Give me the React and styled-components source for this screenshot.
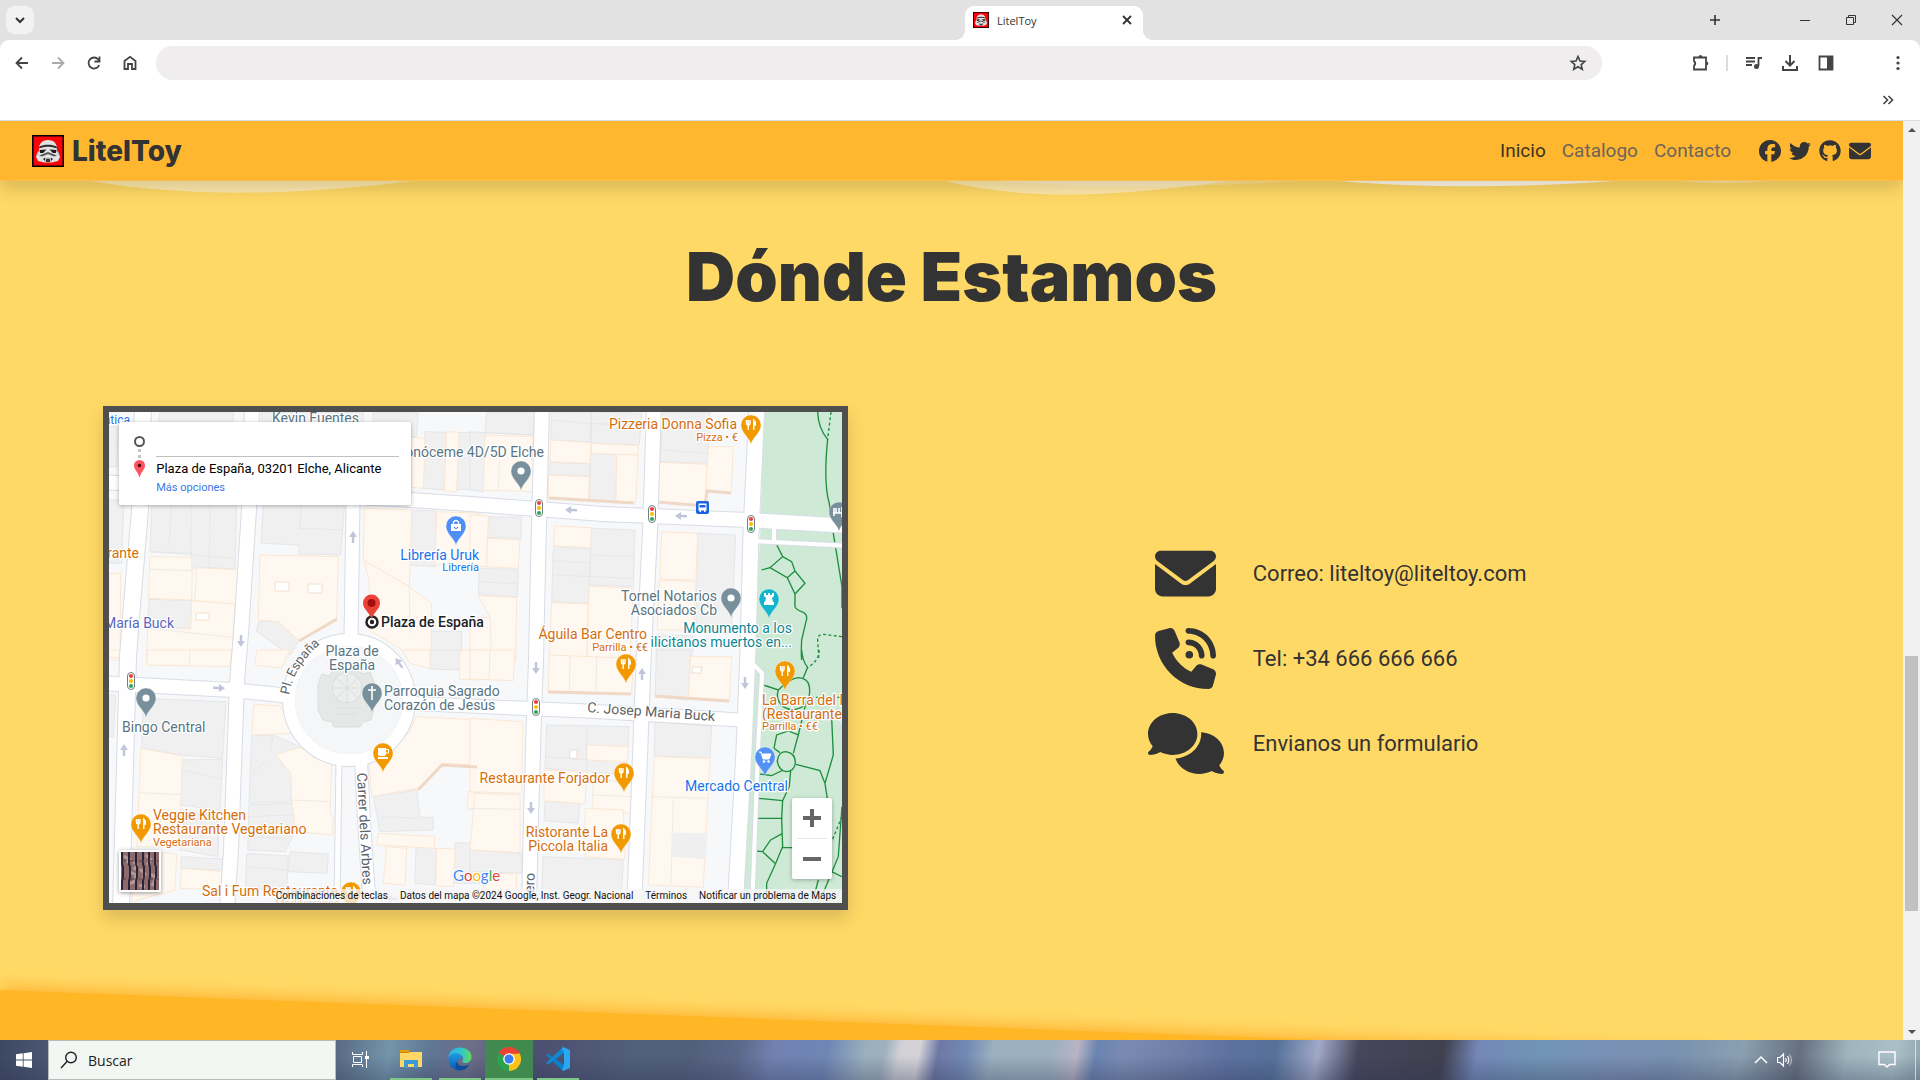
import React from "react";
import styled, { createGlobalStyle } from "styled-components";
import { FaFacebook, FaTwitter, FaGithub, FaEnvelope, FaPhoneVolume, FaComments } from "react-icons/fa6";

const GlobalStyle = createGlobalStyle`
  *, *::before, *::after { box-sizing: border-box; }
  html, body { margin: 0; padding: 0; }
  body { font-family: Roboto, "Liberation Sans", sans-serif; color: #333; overflow: hidden; }
  button { border: 0; background: none; padding: 0; font: inherit; color: inherit; cursor: pointer; }
  input { border: 0; outline: 0; background: none; padding: 0; margin: 0; font: inherit; color: inherit; min-width: 0; }
  a { color: inherit; text-decoration: none; }
  ul { list-style: none; margin: 0; padding: 0; }
`;

const Desktop = styled.div`
  display: flex;
  flex-direction: column;
  height: 100vh;
  background: #e2e2e2;
`;

/* ---------- Browser chrome ---------- */

const TabStrip = styled.div`
  display: flex;
  align-items: center;
  flex: none;
  height: 40px;
  padding-left: 6px;
  background: #e2e2e2;
`;

const TabSearch = styled.button`
  display: grid;
  place-items: center;
  width: 28px;
  height: 28px;
  border-radius: 9px;
  background: #f2f2f2;
`;

const Tab = styled.div`
  position: relative;
  align-self: flex-end;
  display: flex;
  align-items: center;
  gap: 8px;
  width: 178px;
  height: 34px;
  margin-left: auto;
  padding: 0 8px 6px;
  border-radius: 9px 9px 0 0;
  background: #fff;
  font: 11px "Open Sans", "Noto Sans", sans-serif;
  color: #333;
  &::before, &::after {
    content: "";
    position: absolute;
    bottom: 0;
    width: 10px;
    height: 10px;
  }
  &::before { left: -10px; background: radial-gradient(circle at 0 0, transparent 10px, #fff 10px); }
  &::after { right: -10px; background: radial-gradient(circle at 100% 0, transparent 10px, #fff 10px); }
  button { display: grid; place-items: center; }
`;

const TabTitle = styled.span`flex: 1;`;

const StripRight = styled.div`
  display: flex;
  flex: 1;
  max-width: 777px;
  justify-content: flex-end;
`;

const StripButton = styled.button`
  display: grid;
  place-items: center;
  width: 46px;
  height: 40px;
  margin-right: ${(p) => (p.$gap ? "44px" : "0")};
`;

const ToolbarArea = styled.div`
  flex: none;
  height: 81px;
  background: #fff;
  border-radius: 9px 9px 0 0;
  border-bottom: 1px solid #dcdcdc;
`;

const Toolbar = styled.div`
  display: flex;
  align-items: center;
  padding: 6px 4px 0;
`;

const ToolButton = styled.button`
  display: grid;
  place-items: center;
  flex: none;
  width: 36px;
  height: 34px;
  color: ${(p) => (p.$muted ? "#aaa" : "#444")};
`;

const Omnibox = styled.div`
  display: flex;
  align-items: center;
  flex: 1;
  height: 34px;
  margin-left: 8px;
  padding: 0 6px 0 18px;
  border-radius: 17px;
  background: #efedee;
  input { flex: 1; height: 100%; font-size: 14px; }
`;

const Extensions = styled.div`
  display: flex;
  align-items: center;
  width: 314px;
  padding-left: 80px;
`;

const Divider = styled.span`
  width: 2px;
  height: 16px;
  margin: 0 8px;
  background: #dcdcdc;
`;

const LastTool = styled.div`
  margin-left: auto;
`;

const Bookmarks = styled.div`
  display: flex;
  justify-content: flex-end;
  padding: 3px 14px 0;
`;

/* ---------- Page viewport ---------- */

const Viewport = styled.div`
  display: flex;
  flex: 1;
  min-height: 0;
`;

const Page = styled.div`
  display: flex;
  flex-direction: column;
  flex: 1;
  min-width: 0;
  overflow: hidden;
  background: #ffd966;
`;

const Scrollbar = styled.div`
  display: flex;
  flex-direction: column;
  width: 17px;
  background: #f1f1f1;
`;

const ScrollArrow = styled.button`
  display: grid;
  place-items: center;
  height: 17px;
`;

const ScrollSpace = styled.div`flex: ${(p) => p.$grow};`;

const ScrollThumb = styled.div`
  flex: ${(p) => p.$grow};
  margin: 0 2px;
  background: #c1c1c1;
`;

const Navbar = styled.header`
  position: relative;
  z-index: 2;
  display: flex;
  align-items: center;
  flex: none;
  height: 60px;
  padding: 0 32px;
  background: #ffb730;
  border-bottom: 1px solid #ffbc50;
  box-shadow: 0 8px 16px rgba(0, 0, 0, 0.15);
`;

const Brand = styled.a`
  display: flex;
  align-items: center;
  gap: 8px;
  font: 800 28px Inter, sans-serif;
  color: #333;
`;

const NavLinks = styled.nav`
  display: flex;
  gap: 16px;
  margin-left: auto;
  margin-right: 28px;
  font-size: 19px;
`;

const NavLink = styled.a`
  color: ${(p) => (p.$active ? "#3b3220" : "#6d6459")};
`;

const Social = styled.div`
  display: flex;
  gap: 8px;
  color: #333;
  a { display: flex; }
  svg { width: 22px; height: 22px; }
`;

const Waves = styled.svg`
  display: block;
  flex: none;
  width: 100%;
  height: 15px;
`;

const Title = styled.h1`
  margin: 40px 0 90px;
  text-align: center;
  font: 900 68px/80px Inter, Roboto, sans-serif;
  color: #333;
`;

const Columns = styled.main`
  display: grid;
  grid-template-columns: 1fr 1fr;
  align-items: center;
  justify-items: center;
`;

const ContactList = styled.ul`
  justify-self: stretch;
  margin-left: 20%;
`;

const ContactRow = styled.li`
  display: grid;
  grid-template-columns: 88px 1fr;
  align-items: center;
  gap: 23px;
  height: 85px;
  font-size: 22px;
  color: #333;
  svg { width: ${(p) => (p.$wide ? "76px" : "61px")}; height: 61px; justify-self: center; }
`;

const Slant = styled.svg`
  display: block;
  flex: none;
  width: 100%;
  height: 50px;
  margin-top: auto;
  overflow: visible;
  filter: drop-shadow(0 -3px 8px rgba(255, 160, 20, 0.7));
`;

/* ---------- Map ---------- */

const MapFrame = styled.section`
  position: relative;
  width: 100%;
  max-width: 745px;
  border: 6px solid #4f4f4f;
  border-bottom-width: 7px;
  box-shadow: 0 8px 16px rgba(0, 0, 0, 0.15);
  overflow: hidden;
`;

const MapDrawing = styled.svg`
  display: block;
  width: 100%;
  height: auto;
  font-family: Roboto, sans-serif;
`;

const DirectionsCard = styled.form`
  position: absolute;
  top: 10px;
  left: 10px;
  display: grid;
  grid-template-columns: 12px 1fr;
  gap: 11px;
  width: 292px;
  height: 83px;
  padding: 0 12px 0 14px;
  background: #fff;
  border-radius: 2px;
  box-shadow: 0 1px 4px rgba(0, 0, 0, 0.3);
`;

const Fields = styled.div`
  display: flex;
  flex-direction: column;
  font-size: 13px;
  color: #000;
`;

const OriginInput = styled.input`
  height: 35px;
  border-bottom: 1px solid #c0c0c0;
`;

const DestinationInput = styled.input`height: 22px;`;

const MoreOptions = styled.a`
  font-size: 11px;
  line-height: 17px;
  color: #3a77e8;
`;

const SatelliteButton = styled.button`
  position: absolute;
  left: 10px;
  bottom: 11px;
  border: 2px solid #fff;
  border-radius: 2px;
  box-shadow: 0 1px 4px rgba(0, 0, 0, 0.4);
  svg { display: block; }
`;

const ZoomControls = styled.div`
  position: absolute;
  right: 10px;
  bottom: 24px;
  width: 40px;
  background: #fff;
  border-radius: 2px;
  box-shadow: 0 1px 4px rgba(0, 0, 0, 0.3);
  hr { margin: 0 5px; border: 0; height: 1px; background: #e6e6e6; }
`;

const ZoomButton = styled.button`
  display: grid;
  place-items: center;
  width: 40px;
  height: 40px;
`;

const Attribution = styled.footer`
  position: absolute;
  right: 0;
  bottom: 0;
  display: flex;
  gap: 12px;
  height: 14px;
  padding: 0 6px 0 1px;
  background: rgba(245, 245, 245, 0.75);
  font-size: 10px;
  line-height: 14px;
  color: #111;
  white-space: nowrap;
`;

/* Buildings are traced on four map tiles, each drawn at three units per pixel. */
const TILES = [
  {
    x: 100, y: 400,
    grey: [
      "27,80 55,80 50,200 27,200", "180,36 400,36 400,66 175,66", "485,36 790,36 790,66 485,66",
      "820,36 955,36 950,110 820,110", "975,95 1040,97 1035,270 970,265", "1077,97 1140,98 1140,270 1070,268",
      "155,318 410,318 405,507 275,500 275,460 150,455", "147,598 275,602 272,685 143,680",
      "27,300 72,300 65,490 27,490", "490,318 733,318 728,390 722,465 597,462 597,435 483,430",
      "475,665 535,665 597,722 570,765 470,695", "935,330 1010,333 1005,500 928,495", "993,693 1085,695 1085,780 993,780",
    ],
    cream: [
      "1040,95 1077,97 1070,275 1033,272", "933,112 975,115 970,265 933,262",
      "150,470 275,472 275,510 290,503 418,510 410,615 275,600 145,595", "143,685 272,687 275,602 405,612 395,780 140,780",
      "27,520 62,520 60,780 27,780", "480,465 715,470 710,655 597,722 535,665 475,660",
      "793,325 935,330 930,490 928,560 790,480", "1010,335 1140,340 1140,490 1005,495",
      "793,482 928,560 995,612 993,780 940,780 900,745 808,690 808,545",
    ],
    lines: "M213,318 L208,440 M275,318 L272,460 M330,318 L328,505 M150,455 L405,475 M150,508 L277,512 L275,600 M290,503 L285,600 M143,685 L397,712 M603,318 L600,385 L728,390 M928,560 L930,700",
    yards: "",
  },
  {
    x: 470, y: 400,
    grey: [
      "50,36 195,36 188,105 45,98", "0,95 45,98 40,275 0,270", "245,36 365,36 360,125 242,120",
      "365,36 515,40 508,135 365,130", "240,187 360,192 358,228 238,225", "362,160 440,165 438,305 358,300",
      "580,36 720,36 712,190 570,185", "365,385 495,390 490,560 358,555", "250,440 362,447 355,610 245,605",
      "55,350 155,352 152,415 52,412", "28,505 145,508 142,590 25,585", "683,400 797,405 785,700 678,690",
      "560,705 670,708 668,780 558,780",
    ],
    cream: [
      "45,105 190,110 185,180 202,183 197,275 40,270", "242,120 362,128 360,190 240,185", "236,225 358,230 355,302 235,295",
      "440,160 505,165 497,308 438,302", "365,130 505,137 503,165 365,160", "565,187 712,193 708,318 560,308",
      "715,140 790,140 783,280 708,268", "255,378 365,383 362,443 250,437", "358,558 490,565 480,780 350,780",
      "245,608 355,612 350,780 238,780", "0,345 55,348 50,500 0,498", "52,415 150,420 145,505 50,500",
      "25,587 140,592 137,780 0,780 0,655 60,652", "575,395 683,400 678,540 570,537", "568,540 676,545 672,690 562,690",
    ],
    lines: "M45,98 L190,105 M242,60 L360,72 M365,70 L512,78 M570,150 L715,160 M250,525 L490,535 M248,482 L355,488 M360,465 L493,470 M28,545 L143,552 M88,180 L85,272 M60,652 L65,780",
    yards: "",
  },
  {
    x: 100, y: 650,
    grey: [
      "130,145 378,155 368,325 245,315 125,295", "27,135 47,135 40,260 27,260", "245,330 368,328 360,480 240,465",
      "243,480 355,500 355,620 240,600", "243,620 378,628 375,660 243,655",
      "455,258 520,255 600,290 530,315 545,340 575,370 573,455 447,460", "447,465 580,460 585,545 555,605 443,600",
      "570,605 685,612 682,670 565,665", "440,610 565,618 560,720 437,715", "820,440 950,420 960,500 1000,503 1000,540 840,545",
      "948,590 1010,595 1005,705 945,700", "1065,578 1140,580 1140,700 1062,700", "990,0 1080,0 1078,60 990,57",
    ],
    cream: [
      "143,0 395,0 390,50 140,45", "470,0 570,0 545,55 465,45", "123,295 247,318 238,590 110,590",
      "245,655 378,665 372,720 240,715", "462,163 540,168 560,200 575,250 455,255",
      "527,315 600,292 695,340 690,490 700,500 697,555 587,545 575,450 573,370",
      "950,200 1140,210 1140,345 1025,340 955,415 815,440 808,340 890,290 930,240",
      "835,550 1005,560 1003,595 830,585", "860,590 920,595 915,705 850,700", "1010,595 1065,597 1060,710 1008,708",
      "907,0 990,0 990,55 930,40", "1080,0 1140,0 1140,90 1078,88", "27,0 70,0 68,25 27,22",
      "110,600 230,612 225,720 95,755", "1105,425 1140,428 1140,480 1102,478",
    ],
    lines: "M270,0 L268,48 M245,360 L366,388 M117,428 L240,434 M520,255 L510,300 M450,380 L500,330 M573,450 L690,455 M447,500 L580,495 M443,560 L560,565 M440,650 L560,660 M840,500 L960,505",
    yards: "",
  },
  {
    x: 470, y: 650,
    grey: [
      "560,0 662,0 655,150 555,140", "0,600 155,610 155,670 0,665", "230,225 477,230 475,290 470,375 225,355",
      "225,455 330,460 325,520 222,512", "220,620 460,630 455,720 215,720", "555,215 725,228 720,325 553,318",
    ],
    cream: [
      "0,0 135,0 130,92 0,87", "238,15 490,25 485,132 235,122", "662,20 785,20 778,153 655,148",
      "0,205 158,215 155,430 0,425", "15,430 150,435 150,608 0,600", "350,285 475,290 472,335 350,330",
      "222,360 350,365 345,462 222,452", "370,390 490,395 485,490 368,480", "345,475 460,480 465,628 345,620",
      "553,320 720,325 700,712 535,705", "40,668 140,672 138,720 40,720",
    ],
    lines: "M350,228 L350,365 M225,320 L350,330 M60,0 L57,88 M300,20 L298,125 M380,20 L378,128 M545,440 L715,445 M610,445 L603,706 M0,475 L150,478 M370,435 L488,440",
    yards: "M300,300 L322,300 320,326 298,324Z M668,50 L695,52 693,70 665,68Z",
  },
];

const INNER_GREY = "612,548 712,550 708,628 606,620";

const PARK_PATHS = [
  { x: 470, y: 400, d: "M1043,36 Q1045,85 1073,118 Q1060,250 1078,310 L1090,400 L1116,560 V625 M918,430 L938,470 L900,503 L875,510 M938,470 L965,485 L975,513 L1005,550 L975,582 L952,533 L900,503 M975,513 L952,533 M975,582 V620 Q978,630 1000,637 Q1015,645 1008,665 L995,720 Q993,760 995,780", dash: "M1083,36 L1073,118 M1116,710 L1060,703 Q1043,703 1043,720 L1047,780" },
  { x: 470, y: 650, d: "M995,0 Q998,35 1013,52 L1000,83 M880,105 L925,120 Q960,85 985,83 Q1015,85 1018,110 Q1022,140 1010,150 L985,255 L970,310 M925,120 Q915,150 940,170 Q970,190 1005,165 M912,295 L920,255 L955,243 L985,255 M912,295 L930,308 M870,372 L905,377 L940,360 M978,343 L1050,362 L1065,400 L1072,445 M1065,400 L1090,315 L1085,200 M962,362 L958,410 L938,452 L935,505 L938,590 L915,645 L890,700 V728 M865,445 L938,452 M855,505 H938 M858,603 L878,605 L902,570 L938,550 M878,605 L915,640 M938,592 L970,593 M1116,470 L1105,620 L1060,728 M1045,690 L1035,728 M1085,665 L1116,680 M922,332 Q926,305 948,305 Q978,310 976,340 Q972,365 948,365 Q925,360 922,332Z", dash: "M1047,0 Q1050,30 1013,52 M1116,500 L1085,575 M1022,142 H1116" },
];

const ROADS = [
  { d: "M143,405 L140,510 L131,617 L128,657 L121,910", w: 16 },
  { d: "M252,405 L249,510 L241,633 L237,683 L231,850 L227,910", w: 14 },
  { d: "M353,500 L351,640", w: 13 },
  { d: "M100,482 L411,500 L470,504 L603,514 L747,520 L850,526", w: 14 },
  { d: "M542,405 L538,567 L536,660 L534,717 L531,817 L529,910", w: 14 },
  { d: "M654,405 L650,533 L644,650 L639,783 L634,910", w: 14 },
  { d: "M757,405 L751,533 L748,650 L744,750 L735,910", w: 15 },
  { d: "M100,683 L233,690 L290,696", w: 14 },
  { d: "M405,703 L470,706 L587,711 L740,720", w: 13 },
  { d: "M361,760 L364,820 L370,910", w: 12 },
  { d: "M339,758 L337,910", w: 5 },
  { d: "M774,525 V543", w: 4 },
  { d: "M752,541 L850,546", w: 4 },
  { d: "M753,664 L762,673 L758,750 L752,910", w: 4 },
];

const LIGHTS = [[539, 508], [652, 514], [751, 524], [131, 681], [536, 707]];

const ARROWS = [
  [353, 537, 0], [241, 641, 180], [571, 510, 272], [681, 516, 272], [219, 688, 92], [124, 750, 0],
  [536, 668, 180], [642, 674, 0], [745, 683, 180], [531, 808, 180], [399, 663, 325], [392, 899, 270],
];

const FORK = <g stroke="#fff" fill="none" strokeWidth="1.4"><path d="M-4.5,-5 V-2 Q-4.5,0 -2.8,0 Q-1,0 -1,-2 V-5 M-2.8,-5 V5" /><path d="M2.8,5 V-5 Q5,-3 4.4,0 H2.8" fill="#fff" /></g>;
const DOT = <circle r="3.6" fill="#fff" />;
const GLYPHS = {
  fork: FORK,
  dot: DOT,
  bag: <g><path d="M-5,-2 H5 V5 H-5Z" fill="#fff" /><path d="M-2.5,-2 V-4 Q0,-7 2.5,-4 V-2" stroke="#fff" fill="none" strokeWidth="1.3" /><path d="M-2,1 Q0,4 2,1" stroke="#4285f4" fill="none" strokeWidth="1.2" /></g>,
  castle: <path d="M-5,-6 H-3 V-4 H-1 V-6 H1 V-4 H3 V-6 H5 V-3 L3,-1 L4,3 H5 V6 H-5 V3 H-4 L-3,-1 L-5,-3Z" fill="#fff" />,
  cross: <path d="M0,-7 V7 M-4,-3 H4" stroke="#fff" strokeWidth="1.6" />,
  cup: <g fill="#fff"><path d="M-5,-5 H3 V1 Q3,3 1,3 H-3 Q-5,3 -5,1Z M-5,4 H5 V6 H-5Z" /><path d="M3,-3.5 H5.5 V0 H3" fill="none" stroke="#fff" /></g>,
  cart: <g><path d="M-6,-5 H-4 L-2,2 H4 L6,-3 H-3" fill="#fff" stroke="#fff" /><circle cx="-1" cy="4.5" r="1.3" fill="#fff" /><circle cx="3.5" cy="4.5" r="1.3" fill="#fff" /></g>,
  bench: <path d="M-5,-4 V4 M3,-5 V5 M-6,1 H5 M-3,-4 V1 M0,-4 V1" stroke="#fff" strokeWidth="1.6" />,
};

const PINS = [
  [521, 471, "#78909c", "dot"], [456, 526, "#4f8ff5", "bag"], [731, 598, "#78909c", "dot"], [769, 599, "#12b5cb", "castle"],
  [751, 425, "#f29900", "fork"], [626, 664, "#f29900", "fork"], [785, 671, "#f29900", "fork"], [146, 698, "#78909c", "dot"],
  [372, 693, "#78909c", "cross"], [383, 753, "#f29900", "cup"], [141, 824, "#f29900", "fork"], [351, 892, "#f29900", "fork"],
  [624, 773, "#f29900", "fork"], [621, 834, "#f29900", "fork"], [765, 757, "#5491f5", "cart"], [839, 512, "#78909c", "bench"],
];

const SLATE = "#5a7583";
const ORANGE = "#d56e0c";
const BLUE = "#1a73e8";
const TEAL = "#0b8793";

/* x, baseline, text, colour, anchor, size */
const LABELS = [
  [272, 423, "Kevin Fuentes", SLATE, "start", 14],
  [544, 457, "Conóceme 4D/5D Elche", SLATE, "end", 14],
  [130, 424, "Informática", BLUE, "end", 12],
  [139, 558, "Restaurante", ORANGE, "end", 14],
  [174, 628, "C. Josep María Buck", "#5a66c0", "end", 14],
  [479, 560, "Librería Uruk", BLUE, "end", 14],
  [479, 571, "Librería", BLUE, "end", 11],
  [352, 656, "Plaza de", SLATE, "middle", 14],
  [352, 670, "España", SLATE, "middle", 14],
  [384, 696, "Parroquia Sagrado", SLATE, "start", 14],
  [384, 710, "Corazón de Jesús", SLATE, "start", 14],
  [717, 601, "Tornel Notarios", SLATE, "end", 14],
  [717, 615, "Asociados Cb", SLATE, "end", 14],
  [792, 633, "Monumento a los", TEAL, "end", 14],
  [792, 647, "ilicitanos muertos en...", TEAL, "end", 14],
  [647, 639, "Águila Bar Centro", ORANGE, "end", 14],
  [648, 651, "Parrilla • €€", ORANGE, "end", 11],
  [737, 429, "Pizzeria Donna Sofia", ORANGE, "end", 14],
  [738, 441, "Pizza • €", ORANGE, "end", 11],
  [122, 732, "Bingo Central", SLATE, "start", 14],
  [153, 820, "Veggie Kitchen", ORANGE, "start", 14],
  [153, 834, "Restaurante Vegetariano", ORANGE, "start", 14],
  [153, 846, "Vegetariana", ORANGE, "start", 11],
  [202, 896, "Sal i Fum Restaurante", ORANGE, "start", 14],
  [275, 907, "Mediterránea", ORANGE, "start", 11],
  [610, 783, "Restaurante Forjador", ORANGE, "end", 14],
  [608, 837, "Ristorante La", ORANGE, "end", 14],
  [608, 851, "Piccola Italia", ORANGE, "end", 14],
  [762, 705, "La Barra del Parque", ORANGE, "start", 14],
  [762, 719, "(Restaurante)", ORANGE, "start", 14],
  [762, 730, "Parrilla • €€", ORANGE, "start", 11],
  [685, 791, "Mercado Central", BLUE, "start", 14],
];

function StreetMap() {
  return (
    <MapDrawing viewBox="109 412 733 491" role="img" aria-label="Mapa de la Plaza de España, Elche">
      <rect x="109" y="412" width="733" height="491" fill="#f7f8fa" />
      <polygon points="764,412 842,412 842,903 741,903 753,650 760,540" fill="#ceead6" />
      {TILES.map((t) => (
        <g key={`${t.x}-${t.y}`} transform={`translate(${t.x} ${t.y}) scale(0.3333)`} strokeWidth="3" strokeLinejoin="round">
          {t.grey.map((p) => <polygon key={p} points={p} fill="#f0f0f1" stroke="#e5e6e8" />)}
          {t.cream.map((p) => <polygon key={p} points={p} fill="#fff8f1" stroke="#fbe7d3" />)}
          <path d={t.lines} fill="none" stroke="#e6e3e2" strokeWidth="2" />
          {t.yards !== "" && <path d={t.yards} fill="#fff" stroke="#efdccb" />}
        </g>
      ))}
      <polygon points={INNER_GREY} transform="translate(470 650) scale(0.3333)" fill="#efeff0" />
      <g fill="#fff" stroke="#f3dfcc"><path d="M275,582 h14 v9 h-14Z M308,584 h14 v9 h-14Z M196,613 h13 v7 h-13Z" /></g>
      <g fill="none" stroke="#efd9c6" strokeWidth="3">
        <path d="M418,790 L442,765 L477,767 M299,641 L337,619 M548,692 L631,694 M655,696 L729,701 M549,498 L634,503 M657,502 L705,506 L707,491 L731,493" />
      </g>

      {PARK_PATHS.map((p) => (
        <g key={p.d} transform={`translate(${p.x} ${p.y}) scale(0.3333)`} fill="none" stroke="#1e8e3e" strokeWidth="4">
          <path d={p.d} />
          <path d={p.dash} strokeDasharray="9 7" />
        </g>
      ))}

      <g fill="none" stroke="#d8dce5">
        {ROADS.map((r) => <path key={r.d} d={r.d} strokeWidth={r.w + 2} />)}
        <circle cx="349" cy="700" r="60" strokeWidth="14" />
      </g>
      <circle cx="349" cy="700" r="54" fill="#f5f6f8" />
      <g fill="none" stroke="#fff">
        {ROADS.map((r) => <path key={r.d} d={r.d} strokeWidth={r.w} />)}
        <circle cx="349" cy="700" r="60" strokeWidth="12" />
      </g>

      <g fill="#e6e8e8" stroke="#dcdede">
        <path d="M334,667 h26 l2,7 8,-2 4,10 v26 l-3,12 -8,2 -3,5 h-26 l-2,-5 -9,-2 -5,-10 v-26 l4,-10 8,2Z" />
        <circle cx="347" cy="688" r="15" fill="#eceeee" />
        <path d="M347,673 v30 M332,688 h30 M336,678 l22,20 M358,678 l-22,20 M336,708 h22 M338,714 h18" fill="none" />
      </g>

      {ARROWS.map(([x, y, a]) => (
        <path key={`${x}-${y}`} transform={`translate(${x} ${y}) rotate(${a})`} d="M0,-6 L4,0 H1.2 V6 H-1.2 V0 H-4Z" fill="#c1c5db" />
      ))}
      {LIGHTS.map(([x, y]) => (
        <g key={`${x}-${y}`} transform={`translate(${x} ${y})`}>
          <rect x="-3.5" y="-8.5" width="7" height="17" rx="3.5" fill="#fff" stroke="#6f7f86" />
          <circle cy="-5" r="2.1" fill="#ea4335" /><circle r="2.1" fill="#fbbc04" /><circle cy="5" r="2.1" fill="#34a853" />
        </g>
      ))}
      <g transform="translate(702.5 507.5)">
        <rect x="-6.5" y="-6.5" width="13" height="13" rx="2" fill="#1a66e0" />
        <path d="M-4,-4 H4 V3 H3 V4.5 H1.5 V3 H-1.5 V4.5 H-3 V3 H-4Z" fill="#fff" />
        <path d="M-3,-2.5 H3 V0 H-3Z" fill="#1a66e0" />
      </g>

      {PINS.map(([x, y, c, g]) => (
        <g key={`${x}-${y}`} transform={`translate(${x} ${y})`}>
          <path d="M0,19.5 C-1.5,12 -10,8 -10,0 A10,10 0 1 1 10,0 C10,8 1.5,12 0,19.5Z" fill={c} stroke="#fff" strokeOpacity="0.5" strokeWidth="0.6" />
          {GLYPHS[g]}
        </g>
      ))}

      <g paintOrder="stroke" stroke="#fff" strokeWidth="2.5" strokeLinejoin="round">
        {LABELS.map(([x, y, text, c, anchor, size]) => (
          <text key={`${x}-${y}`} x={x} y={y} fill={c} textAnchor={anchor} fontSize={size}>{text}</text>
        ))}
        <g fill="#5f6368" fontSize="14">
          <text transform="translate(587 712) rotate(4)">C. Josep Maria Buck</text>
          <text transform="translate(357 773) rotate(87)">Carrer dels Arbres</text>
          <text transform="translate(534 893) rotate(-88)">ero</text>
          <path id="plaza-ring" d="M289,695 Q294,665 324,641" fill="none" stroke="none" />
          <text fontSize="13"><textPath href="#plaza-ring">Pl. España</textPath></text>
        </g>
        <text x="381" y="627" fill="#202124" fontSize="14" fontWeight="500">Plaza de España</text>
      </g>

      <circle cx="372" cy="622" r="5.5" fill="#fff" stroke="#222" strokeWidth="2.5" />
      <circle cx="372" cy="622" r="2.2" fill="#222" />
      <path d="M371.5,620 C371,613 363,610 363,603 A8.5,8.5 0 1 1 380,603 C380,610 372,613 371.5,620Z" fill="#ea4335" />
      <circle cx="371.5" cy="603" r="4" fill="#a50e0e" />

      <text x="453" y="881" fontSize="15" fontFamily="Lato, sans-serif" fontWeight="400" paintOrder="stroke" stroke="#fff" strokeWidth="2">
        <tspan fill="#4285f4">G</tspan><tspan fill="#ea4335">o</tspan><tspan fill="#fbbc05">o</tspan><tspan fill="#4285f4">g</tspan><tspan fill="#34a853">l</tspan><tspan fill="#ea4335">e</tspan>
      </text>
    </MapDrawing>
  );
}

function Trooper({ size }) {
  return (
    <svg width={size} height={size} viewBox="0 0 32 32" aria-hidden="true">
      <rect width="32" height="32" fill="#000" />
      <rect x="1.5" y="1.5" width="29" height="29" fill="#fb0207" />
      <path d="M7,15 C6.5,9 10,5 16,5 C22,5 25.5,9 25,15 L28,22 L26,26 L20,27.5 H12 L6,26 L4,22Z" fill="#e2e2e2" />
      <path d="M7.5,11.5 C12,9 20,9 24.5,11.5 L25,13.5 C19,11 13,11 7,13.5Z" fill="#2a2a2a" />
      <path d="M7.5,15 L14.5,14.5 L11,18 L8,18Z M24.5,15 L17.5,14.5 L21,18 L24,18Z" fill="#1b1b1b" />
      <path d="M7,20.5 L16,17 L25,20.5 L22,21.5 L16,19 L10,21.5Z" fill="#555" />
      <path d="M11,24 L13.5,22.5 L13,26 Z M21,24 L18.5,22.5 L19,26Z" fill="#222" />
      <path d="M14.5,23.5 h3 l1,3.5 h-5Z" fill="#333" />
      <path d="M4.5,21 L6,17 M27.5,21 L26,17" stroke="#9ac" />
    </svg>
  );
}

function Line({ d, size = 16, width = 2, fill = "none" }) {
  return <svg width={size} height={size} viewBox={`0 0 ${size} ${size}`} fill={fill} stroke="currentColor" strokeWidth={width} aria-hidden="true"><path d={d} /></svg>;
}

/* ---------- Taskbar ---------- */

const TaskbarRoot = styled.footer`
  display: flex;
  align-items: stretch;
  flex: none;
  height: 40px;
  color: #fff;
  background:
    linear-gradient(to bottom, transparent 40%, rgba(40, 48, 80, 0.3)),
    linear-gradient(100deg, #3d4760 0%, #566586 5%, #5a6a85 17.5%, #7395ab 20.3%, #5f7593 22.5%, #6d6f88 24.5%, #4c4f70 28%, #51607c 33%,
      #525f7c 36%, #5c688a 38.4%, #7181b0 40.2%, #6f86b5 43%, #9ab0bd 45%, #9fb0be 46%, #d0d0d5 46.8%, #d5d3d8 47.8%, #6d78a4 48.8%,
      #738ab5 50.3%, #9ab0bf 51.6%, #9db0c0 54.7%, #b8b4c4 56%, #6a84b0 57%, #7a8bb2 58.4%, #7080a8 61%, #5d71a0 64%, #56719a 66.3%,
      #a0a9c8 68.5%, #46465c 70.6%, #40404f 75%, #7488b8 76.8%, #7095b5 80%, #7a90b5 83.5%, #7990b0 87%, #8aa0b0 90.5%, #66707f 93.5%,
      #9fb5be 96%, #aac0c8 98.5%, #8fa5ae 100%);
`;

const StartButton = styled.button`
  display: grid;
  place-items: center;
  width: 48px;
`;

const SearchBox = styled.label`
  display: flex;
  align-items: center;
  gap: 10px;
  width: 288px;
  padding-left: 11px;
  border: 1px solid #bbb;
  background: #f2f7f3;
  color: #222;
  font: 14px "Open Sans", "Noto Sans", sans-serif;
  input { flex: 1; }
  input::placeholder { color: #222; opacity: 1; }
`;

const TaskApps = styled.div`
  display: flex;
  gap: 1px;
`;

const TaskButton = styled.button`
  display: grid;
  place-items: center;
  width: 48px;
  margin-right: ${(p) => (p.$open ? "0" : "2px")};
  background: ${(p) => (p.$active ? "#418a4f" : "none")};
  border-bottom: 2px solid transparent;
  border-image: ${(p) => {
    if (!p.$open) return "none";
    return p.$active
      ? "linear-gradient(#7fc786, #7fc786) 1"
      : "linear-gradient(90deg, transparent 8%, #7fc786 8%, #7fc786 92%, transparent 92%) 1";
  }};
`;

const Tray = styled.div`
  display: flex;
  align-items: center;
  margin-left: auto;
  button { display: grid; place-items: center; width: 24px; height: 40px; }
`;

const Notifications = styled.div`
  display: grid;
  place-items: center;
  width: 57px;
  height: 40px;
  margin-left: 62px;
  border-right: 1px solid rgba(255, 255, 255, 0.6);
  margin-right: 4px;
`;

function Taskbar() {
  return (
    <TaskbarRoot>
      <StartButton aria-label="Inicio de Windows">
        <svg width="16" height="16" viewBox="0 0 16 16" fill="#fff"><path d="M0,2.3 L6.8,1.3 V7.6 H0Z M7.6,1.2 L16,0 V7.6 H7.6Z M0,8.4 H6.8 V14.7 L0,13.7Z M7.6,8.4 H16 V16 L7.6,14.8Z" /></svg>
      </StartButton>
      <SearchBox>
        <svg width="18" height="18" viewBox="0 0 18 18" fill="none" stroke="#222" strokeWidth="1.4" aria-hidden="true"><circle cx="11" cy="6.5" r="5.3" /><path d="M7,10.5 L1,17" /></svg>
        <input type="search" placeholder="Buscar" aria-label="Buscar" />
      </SearchBox>
      <TaskApps>
        <TaskButton aria-label="Vista de tareas">
          <svg width="17" height="17" viewBox="0 0 17 17" fill="none" stroke="#fff"><path d="M0.5,1 V3.5 H10.5 V1 M0.5,16 V13.5 H10.5 V16 M1.5,5.5 H9.5 V11.5 H1.5Z M14.5,0 V17" /><path d="M13,5 h4 v3 h-4Z" fill="#fff" stroke="none" /></svg>
        </TaskButton>
        <TaskButton $open aria-label="Explorador de archivos">
          <svg width="22" height="20" viewBox="0 0 22 20"><path d="M0,1 H9 V4 H0Z" fill="#e5a00d" /><path d="M0,3 H22 V18 H0Z" fill="#ffd767" /><path d="M0,3 H9 V4 H0Z" fill="#c98500" /><path d="M4,11 H18 V19 H14 V15 H8 V19 H4Z" fill="#3d9ad6" /></svg>
        </TaskButton>
        <TaskButton $open aria-label="Microsoft Edge">
          <svg width="24" height="24" viewBox="0 0 24 24">
            <defs>
              <linearGradient id="edge-top"><stop offset="0" stopColor="#29b3ef" /><stop offset="0.6" stopColor="#35c6c6" /><stop offset="1" stopColor="#66dd55" /></linearGradient>
              <linearGradient id="edge-low" x2="0" y2="1"><stop offset="0" stopColor="#1b9de2" /><stop offset="1" stopColor="#0d55b4" /></linearGradient>
            </defs>
            <path d="M0.5,11 C1,4 6,0.5 12,0.5 C19,0.5 23.5,5 23.5,10 C23.5,14 20,16 17,16 C14.5,16 13.5,14.5 15,13 C16,10 13,6.5 9,6.5 C5,6.5 1.5,8.5 0.5,11Z" fill="url(#edge-top)" />
            <path d="M0.5,12 C0.5,8.5 4,6.5 8,6.5 C12,6.5 15,9 15,12 C12,10 9.5,12 9.5,15 C9.5,20 15,22 19,20 C16,23 11,24 8,23 C3,21.5 0.5,17 0.5,12Z" fill="url(#edge-low)" />
            <path d="M9.5,15 C9.5,19 14,20.5 21.5,17.5 C19,22 15,24 10,23.3 C7,21 6.5,16 9.5,15Z" fill="#0f4c9c" />
          </svg>
        </TaskButton>
        <TaskButton $open $active aria-label="Google Chrome">
          <svg width="24" height="24" viewBox="0 0 24 24"><path d="M12,12 L1.6,6 A12,12 0 0 1 22.4,6Z" fill="#ea4335" /><path d="M12,12 L22.4,6 A12,12 0 0 1 12,24Z" fill="#fbc116" /><path d="M12,12 V24 A12,12 0 0 1 1.6,6Z" fill="#2ba24c" /><path d="M12,6.5 H22.7 L16.8,14.7Z" fill="#fbc116" /><path d="M7.2,14.7 L1.6,6 L12,6.5Z" fill="#2ba24c" /><path d="M1.6,6 L6,4 H22 L22.7,6.5 H12 L7,9Z" fill="#ea4335" /><circle cx="12" cy="12" r="5.8" fill="#fff" /><circle cx="12" cy="12" r="4.5" fill="#3b7ded" /></svg>
        </TaskButton>
        <TaskButton $open aria-label="Visual Studio Code">
          <svg width="24" height="24" viewBox="0 0 24 24"><path d="M0,8 L2,6.5 L18,18 V23 L17,24Z" fill="#0c7fcb" /><path d="M0,16 L2,17.5 L18,6 V1 L17,0Z" fill="#1287d3" /><path d="M17,0 L24,3 V21 L17,24 L16,22.5 L18,18 V6 L16,1.5Z" fill="#2aa9f2" /></svg>
        </TaskButton>
      </TaskApps>
      <Tray>
        <button aria-label="Mostrar iconos ocultos"><Line size={14} width={1.5} d="M1,10 L7,4 L13,10" /></button>
        <button aria-label="Volumen"><svg width="16" height="16" viewBox="0 0 16 16" fill="none" stroke="#fff" strokeWidth="1.2"><path d="M0.5,5.5 H3 L6.5,2 V14 L3,10.5 H0.5Z M8.5,6 Q10,8 8.5,10 M10.5,4 Q13,8 10.5,12" /><path d="M12.5,2.5 Q16.5,8 12.5,13.5" strokeOpacity="0.5" /></svg></button>
        <Notifications>
          <button aria-label="Notificaciones"><svg width="18" height="18" viewBox="0 0 18 18" fill="none" stroke="#fff" strokeWidth="1.4"><path d="M1,1 H17 V13.5 H11.5 L9,16 L6.5,13.5 H1Z" /></svg></button>
        </Notifications>
      </Tray>
    </TaskbarRoot>
  );
}

const SAT_STRIPES = [1, 8, 15, 22, 28, 34];

export default function App() {
  return (
    <Desktop>
      <GlobalStyle />
      <TabStrip>
        <TabSearch aria-label="Buscar pestañas"><Line size={12} d="M2,4 L6,8 L10,4" /></TabSearch>
        <Tab>
          <Trooper size={16} />
          <TabTitle>LitelToy</TabTitle>
          <button aria-label="Cerrar pestaña"><Line size={16} width={1.8} d="M4,4 L12,12 M12,4 L4,12" /></button>
        </Tab>
        <StripRight>
          <StripButton $gap aria-label="Nueva pestaña"><Line size={12} width={1.6} d="M6,1 V11 M1,6 H11" /></StripButton>
          <StripButton aria-label="Minimizar"><Line size={12} width={1} d="M1,6.5 H11" /></StripButton>
          <StripButton aria-label="Restaurar"><Line size={12} width={1} d="M1.5,3.5 H8.5 V10.5 H1.5Z M3.5,3.5 V1.5 H10.5 V8.5 H8.5" /></StripButton>
          <StripButton aria-label="Cerrar"><Line size={12} width={1.2} d="M1,1 L11,11 M11,1 L1,11" /></StripButton>
        </StripRight>
      </TabStrip>
      <ToolbarArea>
        <Toolbar>
          <ToolButton aria-label="Atrás"><Line width={1.8} d="M14,8 H3 M8,2.5 L2.5,8 L8,13.5" /></ToolButton>
          <ToolButton $muted aria-label="Adelante"><Line width={1.8} d="M2,8 H13 M8,2.5 L13.5,8 L8,13.5" /></ToolButton>
          <ToolButton aria-label="Recargar"><Line width={1.8} d="M13.2,10 A5.5,5.5 0 1 1 12.3,4.5 L13.5,6 M13.5,1.5 V6.5 H8.5" /></ToolButton>
          <ToolButton aria-label="Página principal"><Line width={1.8} d="M2.5,6 L8,1.8 L13.5,6 V14 H10 V9 H6 V14 H2.5Z" /></ToolButton>
          <Omnibox>
            <input aria-label="Dirección" />
            <ToolButton aria-label="Añadir a marcadores"><Line size={18} width={1.6} d="M9,2.5 L11,7 L15.8,7.4 L12.2,10.6 L13.3,15.3 L9,12.8 L4.7,15.3 L5.8,10.6 L2.2,7.4 L7,7Z" /></ToolButton>
          </Omnibox>
          <Extensions>
            <ToolButton aria-label="Extensiones"><Line size={18} width={1.8} d="M3,3.5 H15 V15.5 H3 V12 Q5.5,9.5 3,7Z M8,3.5 Q9.5,0.5 11,3.5 M15,8 Q18,9.5 15,11" /></ToolButton>
            <Divider />
            <ToolButton aria-label="Multimedia"><svg width="16" height="14" viewBox="0 0 16 14" fill="none" stroke="currentColor" strokeWidth="1.8"><path d="M0,2 H9 M0,5.5 H9 M0,9 H6 M12.5,10 V2 H16" /><circle cx="10.5" cy="10.5" r="2.5" fill="currentColor" stroke="none" /></svg></ToolButton>
            <ToolButton aria-label="Descargas"><Line width={2} d="M8,0 V10 M3.5,6 L8,10.5 L12.5,6 M1,11 V15 H15 V11" /></ToolButton>
            <ToolButton aria-label="Panel lateral"><svg width="16" height="16" viewBox="0 0 16 16" fill="none" stroke="currentColor" strokeWidth="1.8"><path d="M1.5,1.5 H14.5 V14.5 H1.5Z" /><path d="M9,1 H15 V15 H9Z" fill="currentColor" stroke="none" /></svg></ToolButton>
            <LastTool><ToolButton aria-label="Menú"><svg width="4" height="16" viewBox="0 0 4 16" fill="currentColor"><circle cx="2" cy="2.5" r="1.6" /><circle cx="2" cy="8" r="1.6" /><circle cx="2" cy="13.5" r="1.6" /></svg></ToolButton></LastTool>
          </Extensions>
        </Toolbar>
        <Bookmarks>
          <ToolButton aria-label="Más marcadores"><Line size={12} width={1.6} d="M1.5,2 L5.5,6 L1.5,10 M6.5,2 L10.5,6 L6.5,10" /></ToolButton>
        </Bookmarks>
      </ToolbarArea>

      <Viewport>
        <Page>
          <Navbar>
            <Brand href="#"><Trooper size={32} />LitelToy</Brand>
            <NavLinks>
              <NavLink $active href="#inicio">Inicio</NavLink>
              <NavLink href="#catalogo">Catalogo</NavLink>
              <NavLink href="#contacto">Contacto</NavLink>
            </NavLinks>
            <Social>
              <a href="#facebook" aria-label="Facebook"><FaFacebook /></a>
              <a href="#twitter" aria-label="Twitter"><FaTwitter /></a>
              <a href="#github" aria-label="GitHub"><FaGithub /></a>
              <a href="#correo" aria-label="Correo"><FaEnvelope /></a>
            </Social>
          </Navbar>
          <Waves viewBox="0 0 1903 15" preserveAspectRatio="none" aria-hidden="true">
            <path d="M90,0 C190,16 290,15 412,0Z" fill="#fff" fillOpacity="0.45" />
            <path d="M945,0 C1030,20 1110,16 1230,0Z" fill="#fff" fillOpacity="0.45" />
            <path d="M1000,0 C1100,8 1200,6 1300,0Z" fill="#fff" fillOpacity="0.25" />
            <path d="M1340,0 C1420,7 1520,7 1615,0Z" fill="#fffdf5" fillOpacity="0.9" />
            <path d="M1680,0 Q1725,4 1768,0Z" fill="#fff" fillOpacity="0.4" />
          </Waves>
          <Title>Dónde Estamos</Title>
          <Columns>
            <MapFrame>
              <StreetMap />
              <DirectionsCard>
                <svg width="12" height="83" viewBox="0 0 12 83" aria-hidden="true">
                  <circle cx="6.5" cy="19.5" r="4.5" fill="none" stroke="#555" strokeWidth="2" />
                  <path d="M5,27 h3 v3 h-3Z M5,33 h3 v3 h-3Z" fill="#c4c4c4" />
                  <path d="M6.5,56 C5.5,50 1,48 1,43.5 A5.5,5.5 0 1 1 12,43.5 C12,48 7.5,50 6.5,56Z" fill="#ff5260" />
                  <circle cx="6.5" cy="43.5" r="1.8" fill="#4b0d12" />
                </svg>
                <Fields>
                  <OriginInput aria-label="Origen" />
                  <DestinationInput aria-label="Destino" defaultValue="Plaza de España, 03201 Elche, Alicante" />
                  <MoreOptions href="#opciones">Más opciones</MoreOptions>
                </Fields>
              </DirectionsCard>
              <SatelliteButton aria-label="Vista de satélite">
                <svg width="38" height="38" viewBox="0 0 38 38">
                  <rect width="38" height="38" fill="#8d6a6b" />
                  <path d="M3,4 l5,3 -2,4 M12,9 l4,4 -3,5 M25,3 l5,5 -4,5 M9,20 l6,3 -2,7 -6,2 M19,17 l5,5 -3,6 M30,22 l5,4 -4,8 M18,33 l6,2" stroke="#b39a97" strokeWidth="3" fill="none" />
                  {SAT_STRIPES.map((x) => <path key={x} d={`M${x},0 v12 l1,3 v10 l-1,4 v9`} stroke="#2b2337" strokeWidth="2" fill="none" />)}
                  <path d="M0,9 H38 M0,27 H38" stroke="#4f3f48" strokeDasharray="5 4" />
                </svg>
              </SatelliteButton>
              <ZoomControls>
                <ZoomButton type="button" aria-label="Acercar"><svg width="18" height="18" viewBox="0 0 18 18" fill="#666"><path d="M7,0 h4 v7 h7 v4 h-7 v7 h-4 v-7 h-7 v-4 h7Z" /></svg></ZoomButton>
                <hr />
                <ZoomButton type="button" aria-label="Alejar"><svg width="18" height="18" viewBox="0 0 18 18" fill="#666"><path d="M0,7 h18 v4 h-18Z" /></svg></ZoomButton>
              </ZoomControls>
              <Attribution>
                <span>Combinaciones de teclas</span>
                <span>Datos del mapa ©2024 Google, Inst. Geogr. Nacional</span>
                <a href="#terminos">Términos</a>
                <a href="#problema">Notificar un problema de Maps</a>
              </Attribution>
            </MapFrame>
            <ContactList>
              <ContactRow><FaEnvelope /><span>Correo: liteltoy@liteltoy.com</span></ContactRow>
              <ContactRow><FaPhoneVolume /><span>Tel: +34 666 666 666</span></ContactRow>
              <ContactRow $wide><FaComments /><a href="#formulario">Envianos un formulario</a></ContactRow>
            </ContactList>
          </Columns>
          <Slant viewBox="0 0 1903 50" preserveAspectRatio="none" aria-hidden="true">
            <polygon points="0,0 1903,72 0,72" fill="#ffb726" />
          </Slant>
        </Page>
        <Scrollbar>
          <ScrollArrow aria-label="Subir"><svg width="8" height="4" viewBox="0 0 8 4" fill="#505050"><path d="M0,4 L4,0 L8,4Z" /></svg></ScrollArrow>
          <ScrollSpace $grow={518} />
          <ScrollThumb $grow={255} />
          <ScrollSpace $grow={112} />
          <ScrollArrow aria-label="Bajar"><svg width="8" height="4" viewBox="0 0 8 4" fill="#505050"><path d="M0,0 L4,4 L8,0Z" /></svg></ScrollArrow>
        </Scrollbar>
      </Viewport>
      <Taskbar />
    </Desktop>
  );
}
